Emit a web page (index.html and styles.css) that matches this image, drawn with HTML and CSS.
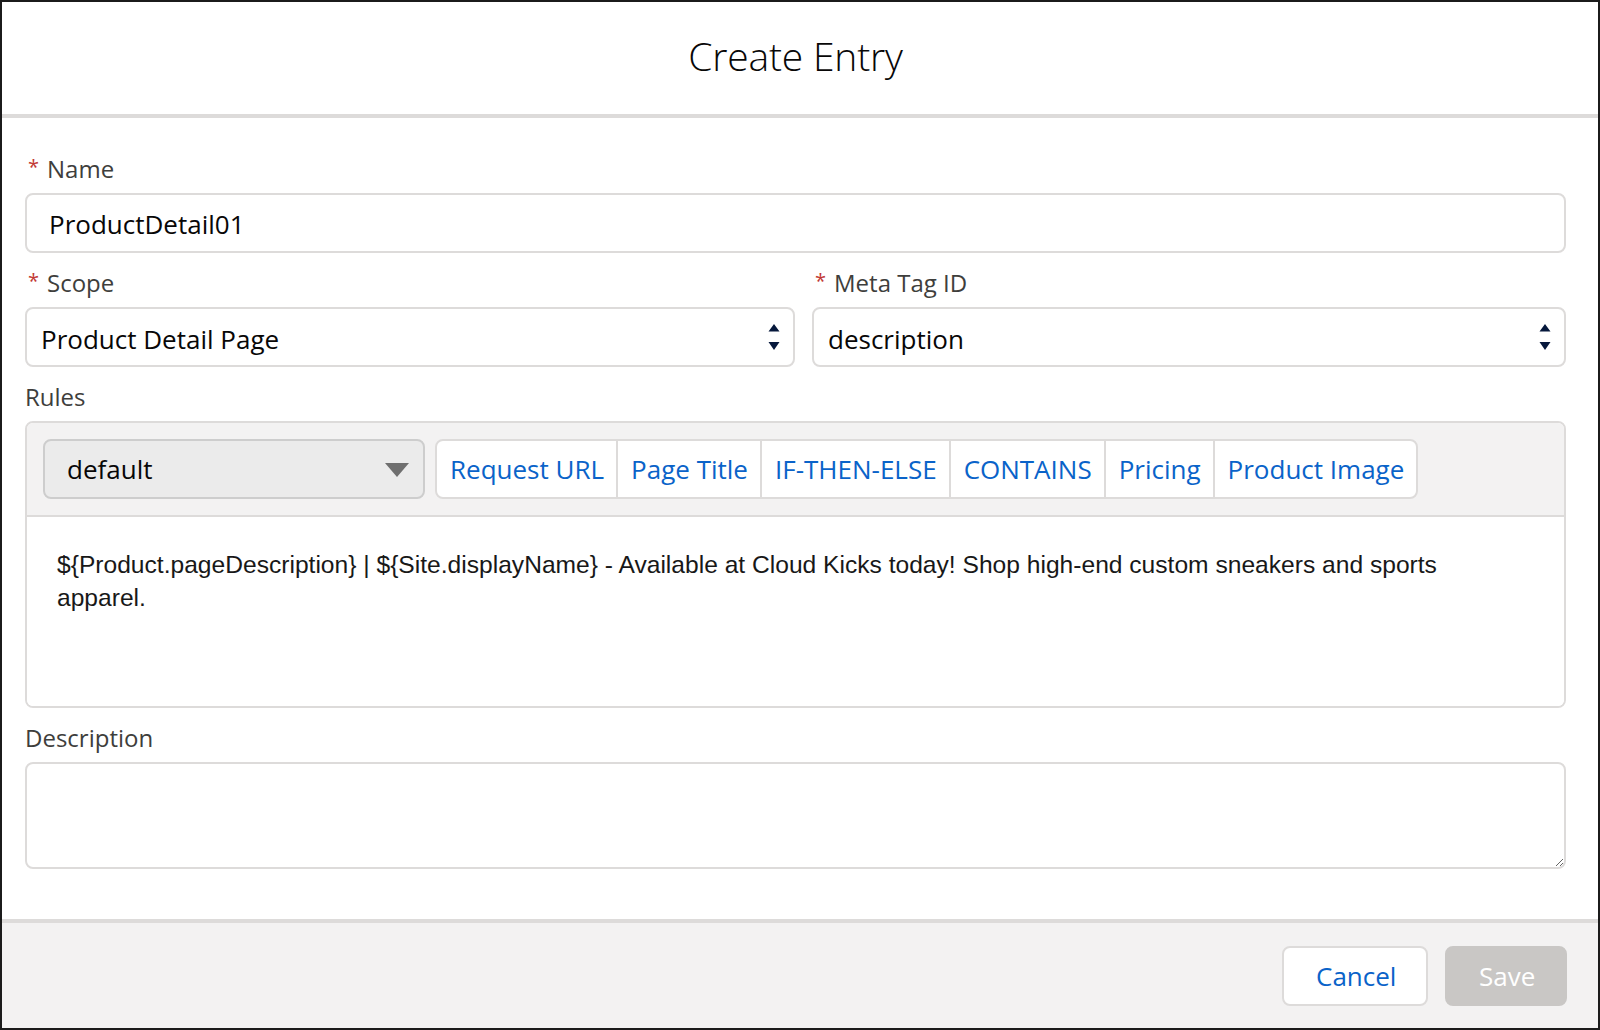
FILE: index.html
```html
<!DOCTYPE html>
<html lang="en">
<head>
<meta charset="utf-8">
<title>Create Entry</title>
<link rel="stylesheet" href="styles.css">
</head>
<body>
<div class="modal">
  <header class="modal-header">
    <h1 class="modal-title">Create Entry</h1>
  </header>
  <div class="modal-body">
    <div class="field">
      <div class="label"><abbr class="req">*</abbr>Name</div>
      <div class="input">ProductDetail01</div>
    </div>
    <div class="field row">
      <div class="col-left">
        <div class="label"><abbr class="req">*</abbr>Scope</div>
        <div class="input select">
          <span>Product Detail Page</span>
          <svg class="updown" width="12" height="28" viewBox="0 0 12 28"><path d="M6 0 L11.5 7.5 L0.5 7.5 Z M0.5 18 L11.5 18 L6 26 Z" fill="#06183c"/></svg>
        </div>
      </div>
      <div class="col-right">
        <div class="label"><abbr class="req">*</abbr>Meta Tag ID</div>
        <div class="input select">
          <span>description</span>
          <svg class="updown" width="12" height="28" viewBox="0 0 12 28"><path d="M6 0 L11.5 7.5 L0.5 7.5 Z M0.5 18 L11.5 18 L6 26 Z" fill="#06183c"/></svg>
        </div>
      </div>
    </div>
    <div class="field">
      <div class="label plain">Rules</div>
      <div class="rules">
        <div class="toolbar">
          <div class="picker">
            <span>default</span>
            <svg width="24" height="14" viewBox="0 0 24 14"><path d="M0 0 H24 L12 14 Z" fill="#6f6f6f"/></svg>
          </div>
          <div class="btn-group">
            <span class="seg">Request URL</span>
            <span class="seg">Page Title</span>
            <span class="seg">IF-THEN-ELSE</span>
            <span class="seg">CONTAINS</span>
            <span class="seg">Pricing</span>
            <span class="seg">Product Image</span>
          </div>
        </div>
        <div class="rules-text">${Product.pageDescription} | ${Site.displayName} - Available at Cloud Kicks today! Shop high-end custom sneakers and sports apparel.</div>
      </div>
    </div>
    <div class="field">
      <div class="label plain">Description</div>
      <textarea class="textarea"></textarea>
    </div>
  </div>
  <footer class="modal-footer">
    <button class="btn btn-neutral">Cancel</button>
    <button class="btn btn-disabled">Save</button>
  </footer>
</div>
</body>
</html>
```

FILE: styles.css
```css
* { box-sizing: border-box; }
html, body { margin: 0; padding: 0; }
body {
  width: 1600px;
  height: 1030px;
  font-family: "Open Sans", "Liberation Sans", sans-serif;
  color: #080707;
  background: #ffffff;
}
.modal {
  width: 1600px;
  height: 1030px;
  border: 2px solid #1b1b1b;
  display: flex;
  flex-direction: column;
  background: #ffffff;
}
.modal-header {
  height: 116px;
  flex: 0 0 auto;
  border-bottom: 4px solid #dddbda;
  display: flex;
  align-items: center;
  justify-content: center;
  padding: 0 32px 4px 23px;
}
.modal-title {
  margin: 0;
  font-size: 39px;
  font-weight: 300;
  line-height: 50px;
  color: #080707;
  letter-spacing: -0.2px;
}
.modal-body {
  flex: 1 1 auto;
  padding: 33px 32px 0 23px;
  display: flex;
  flex-direction: column;
  gap: 12px;
}
.label {
  font-size: 24px;
  line-height: 36px;
  height: 36px;
  color: #3e3e3c;
  margin-bottom: 6px;
  display: flex;
  align-items: center;
}
.req {
  color: #c23934;
  text-decoration: none;
  font-size: 20px;
  margin: 0 8px 0 3px;
  position: relative;
  top: -2px;
}
.input {
  height: 60px;
  border: 2px solid #dddbda;
  border-radius: 8px;
  background: #ffffff;
  font-size: 26px;
  padding: 2px 24px 0 22px;
  display: flex;
  align-items: center;
  color: #080707;
}
.select {
  padding-left: 14px;
  padding-right: 13px;
  justify-content: space-between;
}
.select span { padding-top: 2px; }
.updown { display: block; }
.row {
  display: grid;
  grid-template-columns: 770px 1fr;
  column-gap: 17px;
}
.rules {
  border: 2px solid #dddbda;
  border-radius: 8px;
  overflow: hidden;
}
.toolbar {
  background: #f3f2f2;
  border-bottom: 2px solid #dddbda;
  padding: 16px 14px 16px 16px;
  display: flex;
  align-items: center;
  gap: 10px;
}
.picker {
  width: 382px;
  height: 60px;
  border: 2px solid #cdcdcd;
  border-radius: 8px;
  background: #ebebeb;
  font-size: 26px;
  color: #080707;
  display: flex;
  align-items: center;
  justify-content: space-between;
  padding: 0 14px 0 22px;
}
.picker svg { display: block; margin-top: 2px; }
.btn-group {
  height: 60px;
  display: flex;
  border: 2px solid #dddbda;
  border-radius: 8px;
  background: #ffffff;
  overflow: hidden;
}
.seg {
  display: flex;
  align-items: center;
  padding: 0 12px 0 13px;
  font-size: 26px;
  color: #0a63c9;
  border-left: 2px solid #dddbda;
}
.seg:first-child { border-left: none; }
.rules-text {
  height: 189px;
  padding: 31px 60px 0 30px;
  font-family: "Liberation Sans", Arial, sans-serif;
  font-size: 24.6px;
  line-height: 33px;
  color: #181818;
  background: #ffffff;
}
.textarea {
  display: block;
  width: 100%;
  height: 107px;
  border: 2px solid #dddbda;
  border-radius: 8px;
  background: #ffffff;
  resize: vertical;
  margin: 0;
  font-family: inherit;
  font-size: 26px;
  padding: 12px 24px;
  outline: none;
}
.modal-footer {
  flex: 0 0 auto;
  height: 109px;
  border-top: 4px solid #dddbda;
  background: #f3f2f2;
  display: flex;
  align-items: center;
  justify-content: flex-end;
  gap: 17px;
  padding: 0 31px 0 23px;
}
.btn {
  height: 60px;
  border-radius: 8px;
  font-family: "Open Sans", "Liberation Sans", sans-serif;
  font-size: 26px;
  padding: 0 32px;
  margin: 0;
  line-height: 56px;
}
.btn-neutral {
  width: 146px;
  border: 2px solid #dddbda;
  background: #ffffff;
  color: #0a63c9;
}
.btn-disabled {
  width: 122px;
  border: 2px solid #c9c7c5;
  background: #c9c7c5;
  color: #ffffff;
}
```
